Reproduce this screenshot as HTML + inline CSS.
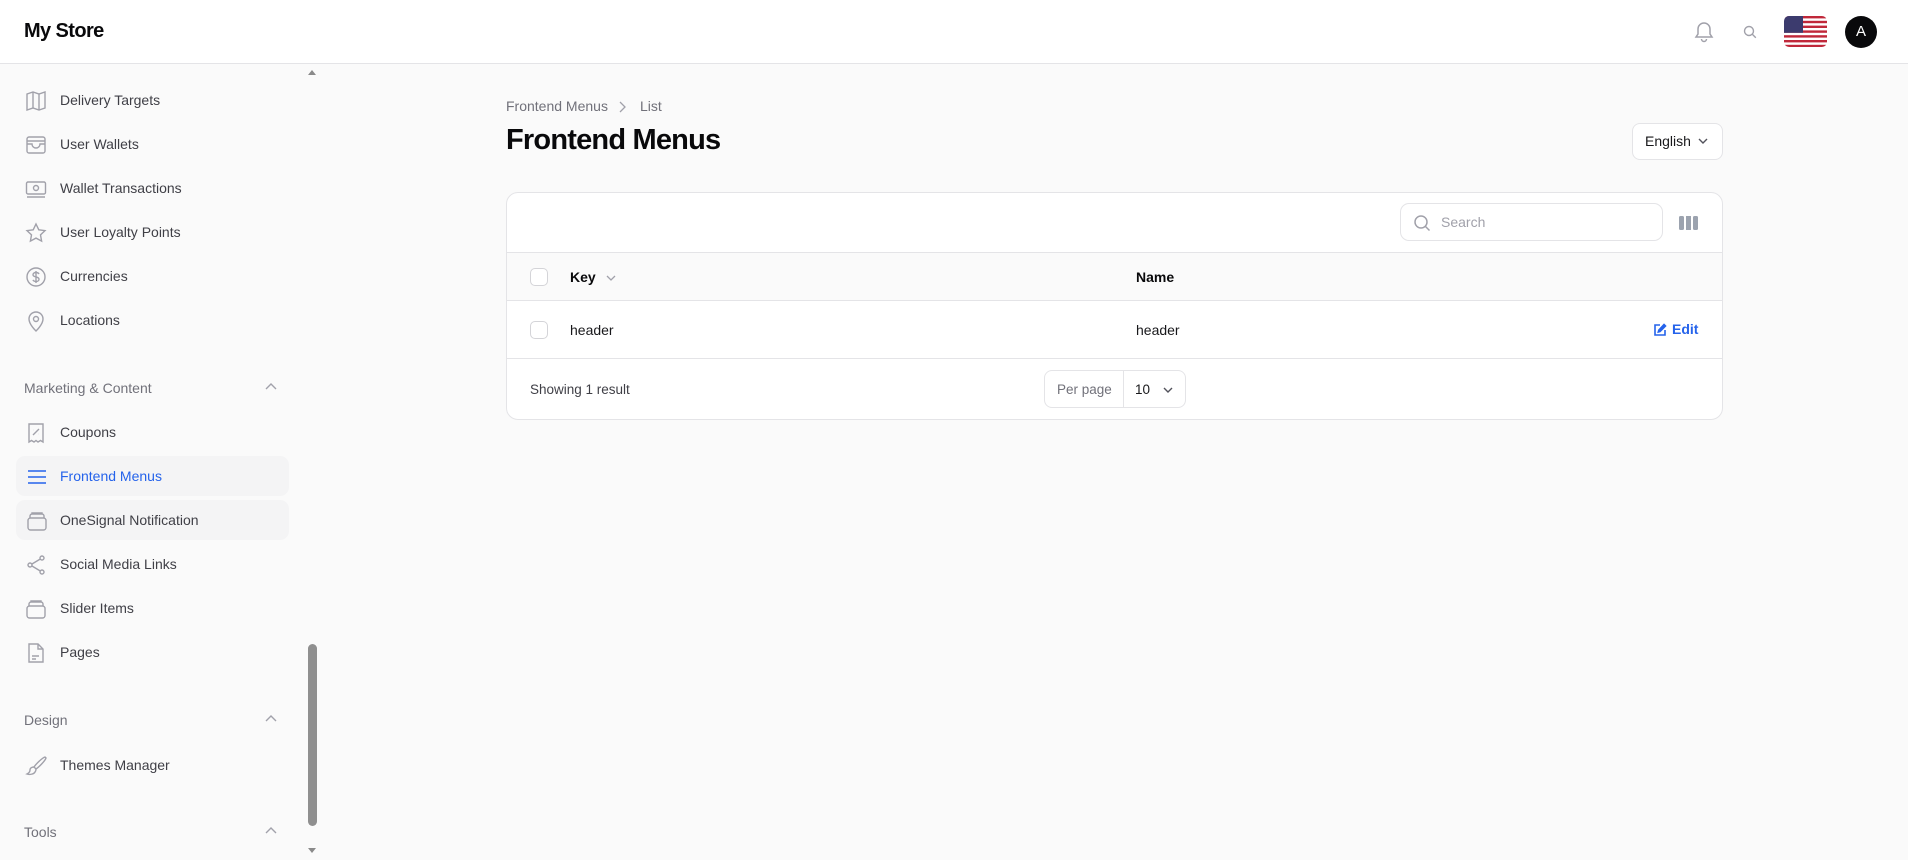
<!DOCTYPE html>
<html><head><meta charset="utf-8"><style>
*{box-sizing:border-box;margin:0;padding:0}
body{width:1908px;height:860px;overflow:hidden;background:#fafafa;font-family:"Liberation Sans",sans-serif;color:#18181b;position:relative}
.top{position:absolute;left:0;top:0;width:1908px;height:64px;background:#fff;border-bottom:1px solid #e4e4e7}
.logo{position:absolute;left:24px;top:20px;font-size:20px;font-weight:bold;letter-spacing:-0.6px;color:#09090b}
.abs{position:absolute}
.nav{position:absolute;left:0;font-size:14px;color:#3f3f46;height:40px;line-height:40px}
.nav .t{position:absolute;left:60px;white-space:nowrap}
.nav svg{position:absolute;left:25px;top:10px}
.grp{position:absolute;left:24px;font-size:14px;color:#71717a}
.chev{position:absolute;left:264px}
.card{position:absolute;left:506px;top:192px;width:1217px;height:228px;background:#fff;border:1px solid #e4e4e7;border-radius:12px;overflow:hidden}
.cb{position:absolute;width:18px;height:18px;border:1px solid #d4d4d8;border-radius:5px;background:#fff}
</style></head><body>
<div class="top">
<div class="logo">My Store</div>
<svg class="abs" style="left:1693px;top:20px" width="22" height="24" viewBox="0 0 22 24" fill="none" stroke="#a1a1aa" stroke-width="1.5"><path d="M11 3a6 6 0 0 0-6 6v5l-2 3h16l-2-3V9a6 6 0 0 0-6-6z"/><path d="M8.5 19a2.5 2.5 0 0 0 5 0"/></svg>
<svg class="abs" style="left:1742px;top:24px" width="16" height="16" viewBox="0 0 16 16" fill="none" stroke="#a1a1aa" stroke-width="1.4"><circle cx="7" cy="7" r="4.5"/><path d="M10.3 10.3l3.5 3.5"/></svg>
<svg class="abs" style="left:1784px;top:16px" width="43" height="31" viewBox="0 0 43 31"><defs><clipPath id="c"><rect width="43" height="31" rx="5"/></clipPath></defs><g clip-path="url(#c)"><rect width="43" height="31" fill="#fff"/><g fill="#c0283a"><rect y="0" width="43" height="2.4"/><rect y="4.8" width="43" height="2.4"/><rect y="9.6" width="43" height="2.4"/><rect y="14.4" width="43" height="2.4"/><rect y="19.2" width="43" height="2.4"/><rect y="24" width="43" height="2.4"/><rect y="28.8" width="43" height="2.4"/></g><rect width="19" height="16.8" fill="#3c3b6e"/></g></svg>
<div class="abs" style="left:1845px;top:16px;width:32px;height:32px;border-radius:50%;background:#09090b;color:#fff;font-size:15px;text-align:center;line-height:32px">A</div>
</div>

<div class="abs" style="left:305px;top:65px;width:15px;height:795px;background:#fafafa"></div>
<div class="abs" style="left:308px;top:70px;width:0;height:0;border-left:4px solid transparent;border-right:4px solid transparent;border-bottom:5px solid #8a8a8a"></div>
<div class="abs" style="left:308px;top:848px;width:0;height:0;border-left:4px solid transparent;border-right:4px solid transparent;border-top:5px solid #8a8a8a"></div>
<div class="abs" style="left:308px;top:644px;width:9px;height:182px;border-radius:5px;background:#8f8f8f"></div>

<div class="nav" style="top:80px"><svg width="22" height="22" viewBox="0 0 22 22" fill="none" stroke="#a1a1aa" stroke-width="1.4"><path d="M2 4l6-2 6 2 6-2v16l-6 2-6-2-6 2z"/><path d="M8 2v16M14 4v16"/></svg><span class="t">Delivery Targets</span></div>
<div class="nav" style="top:124px"><svg width="22" height="22" viewBox="0 0 22 22" fill="none" stroke="#a1a1aa" stroke-width="1.4"><rect x="2" y="3" width="18" height="16" rx="2"/><path d="M2 7h18M2 10h5a4 4 0 0 0 8 0h5"/></svg><span class="t">User Wallets</span></div>
<div class="nav" style="top:168px"><svg width="22" height="22" viewBox="0 0 22 22" fill="none" stroke="#a1a1aa" stroke-width="1.4"><rect x="1.5" y="4" width="19" height="12" rx="1.5"/><circle cx="11" cy="10" r="2.5"/><path d="M2 19h18"/></svg><span class="t">Wallet Transactions</span></div>
<div class="nav" style="top:212px"><svg width="22" height="22" viewBox="0 0 22 22" fill="none" stroke="#a1a1aa" stroke-width="1.4"><path d="M11 2l2.8 5.8 6.2.8-4.5 4.3 1.1 6.2L11 16.1 5.4 19.1l1.1-6.2L2 8.6l6.2-.8z"/></svg><span class="t">User Loyalty Points</span></div>
<div class="nav" style="top:256px"><svg width="22" height="22" viewBox="0 0 22 22" fill="none" stroke="#a1a1aa" stroke-width="1.4"><circle cx="11" cy="11" r="9"/><path d="M14 8c-.5-1-1.6-1.5-3-1.5-1.7 0-3 .8-3 2.2 0 3 6 1.5 6 4.5 0 1.4-1.3 2.3-3 2.3-1.5 0-2.6-.6-3-1.6M11 5v12"/></svg><span class="t">Currencies</span></div>
<div class="nav" style="top:300px"><svg width="22" height="22" viewBox="0 0 22 22" fill="none" stroke="#a1a1aa" stroke-width="1.4"><path d="M11 21s-7-6.5-7-12a7 7 0 0 1 14 0c0 5.5-7 12-7 12z"/><circle cx="11" cy="9" r="2.5"/></svg><span class="t">Locations</span></div>

<div class="grp" style="top:380px">Marketing &amp; Content</div>
<svg class="chev" style="top:382px" width="14" height="10" viewBox="0 0 14 10" fill="none" stroke="#a1a1aa" stroke-width="1.4"><path d="M2 7l5-5 5 5"/></svg>

<div class="nav" style="top:412px"><svg width="22" height="22" viewBox="0 0 22 22" fill="none" stroke="#a1a1aa" stroke-width="1.4"><path d="M4 2h14v18l-2.5-1.5L13 20l-2-1.5L9 20l-2.5-1.5L4 20z"/><path d="M8 13l6-6M8.5 8h.1M13.5 12h.1"/></svg><span class="t">Coupons</span></div>
<div class="nav" style="top:456px;left:16px;width:273px;background:#f4f4f5;border-radius:9px;color:#2563eb"><svg style="left:10px" width="22" height="22" viewBox="0 0 22 22" fill="none" stroke="#2563eb" stroke-width="1.6"><path d="M2 5h18M2 11h18M2 17h18"/></svg><span class="t" style="left:44px">Frontend Menus</span></div>
<div class="nav" style="top:500px;left:16px;width:273px;background:#f4f4f5;border-radius:9px"><svg style="left:10px" width="22" height="22" viewBox="0 0 22 22" fill="none" stroke="#a1a1aa" stroke-width="1.4"><rect x="2" y="8" width="18" height="12" rx="2.5"/><path d="M4 8V6a2 2 0 0 1 2-2h10a2 2 0 0 1 2 2v2M6 4V3h10v1"/></svg><span class="t" style="left:44px">OneSignal Notification</span></div>
<div class="nav" style="top:544px"><svg width="22" height="22" viewBox="0 0 22 22" fill="none" stroke="#a1a1aa" stroke-width="1.4"><circle cx="17" cy="4" r="2"/><circle cx="5" cy="11" r="2"/><circle cx="17" cy="18" r="2"/><path d="M7 10l8.3-5M7 12l8.3 5"/></svg><span class="t">Social Media Links</span></div>
<div class="nav" style="top:588px"><svg width="22" height="22" viewBox="0 0 22 22" fill="none" stroke="#a1a1aa" stroke-width="1.4"><rect x="2" y="8" width="18" height="12" rx="2.5"/><path d="M4 8V6a2 2 0 0 1 2-2h10a2 2 0 0 1 2 2v2M6 4V3h10v1"/></svg><span class="t">Slider Items</span></div>
<div class="nav" style="top:632px"><svg width="22" height="22" viewBox="0 0 22 22" fill="none" stroke="#a1a1aa" stroke-width="1.4"><path d="M4 2h9l5 5v13H4z"/><path d="M13 2v5h5M7 14h7M7 17h4"/></svg><span class="t">Pages</span></div>

<div class="grp" style="top:712px">Design</div>
<svg class="chev" style="top:714px" width="14" height="10" viewBox="0 0 14 10" fill="none" stroke="#a1a1aa" stroke-width="1.4"><path d="M2 7l5-5 5 5"/></svg>
<div class="nav" style="top:745px"><svg width="22" height="22" viewBox="0 0 22 22" fill="none" stroke="#a1a1aa" stroke-width="1.4"><path d="M20 2c-3 1-9 7-11 10l2 2c3-2 9-8 10-11z"/><path d="M9 12c-2 0-4 1-4 3 0 2-1 3-3 4 3 1 7 0 8-2 1-1 1-2 1-3"/></svg><span class="t">Themes Manager</span></div>
<div class="grp" style="top:824px">Tools</div>
<svg class="chev" style="top:826px" width="14" height="10" viewBox="0 0 14 10" fill="none" stroke="#a1a1aa" stroke-width="1.4"><path d="M2 7l5-5 5 5"/></svg>

<div class="abs" style="left:506px;top:98px;font-size:14px;color:#71717a">Frontend Menus</div>
<svg class="abs" style="left:617px;top:101px" width="10" height="12" viewBox="0 0 10 12" fill="none" stroke="#a1a1aa" stroke-width="1.3"><path d="M3 1l5 5-5 5"/></svg>
<div class="abs" style="left:640px;top:98px;font-size:14px;color:#71717a">List</div>
<div class="abs" style="left:506px;top:124px;font-size:29px;font-weight:bold;letter-spacing:-0.8px;color:#09090b">Frontend Menus</div>
<div class="abs" style="left:1632px;top:123px;width:91px;height:37px;background:#fff;border:1px solid #e4e4e7;border-radius:8px;font-size:14px;line-height:35px;padding-left:12px">English</div>
<svg class="abs" style="left:1697px;top:137px" width="12" height="8" viewBox="0 0 12 8" fill="none" stroke="#52525b" stroke-width="1.4"><path d="M2 2l4 4 4-4"/></svg>

<div class="card">
 <div class="abs" style="left:893px;top:10px;width:263px;height:38px;border:1px solid #e4e4e7;border-radius:9px"></div>
 <svg class="abs" style="left:906px;top:21px" width="18" height="18" viewBox="0 0 18 18" fill="none" stroke="#a1a1aa" stroke-width="1.5"><circle cx="8" cy="8" r="6"/><path d="M12.5 12.5l4 4"/></svg>
 <div class="abs" style="left:934px;top:21px;font-size:14px;color:#a1a1aa">Search</div>
 <svg class="abs" style="left:1172px;top:23px" width="19" height="14" viewBox="0 0 19 14" fill="#9ca3af"><rect x="0" y="0" width="5" height="14" rx="1.5"/><rect x="7" y="0" width="5" height="14"/><rect x="14" y="0" width="5" height="14" rx="1.5"/></svg>
 <div class="abs" style="left:0;top:59px;width:1217px;height:49px;background:#fafafa;border-top:1px solid #e4e4e7;border-bottom:1px solid #e4e4e7"></div>
 <div class="cb" style="left:23px;top:75px"></div>
 <div class="abs" style="left:63px;top:76px;font-size:14px;font-weight:bold;color:#09090b">Key</div>
 <svg class="abs" style="left:98px;top:81px" width="12" height="8" viewBox="0 0 12 8" fill="none" stroke="#a1a1aa" stroke-width="1.3"><path d="M2 2l4 4 4-4"/></svg>
 <div class="abs" style="left:629px;top:76px;font-size:14px;font-weight:bold;color:#09090b">Name</div>
 <div class="cb" style="left:23px;top:128px"></div>
 <div class="abs" style="left:63px;top:129px;font-size:14px">header</div>
 <div class="abs" style="left:629px;top:129px;font-size:14px">header</div>
 <svg class="abs" style="left:1146px;top:130px" width="14" height="14" viewBox="0 0 14 14" fill="none" stroke="#2563eb" stroke-width="1.6"><path d="M7 2H2v10h10V7"/><path d="M11 1.5l1.5 1.5L7 8.5 5.3 9 5.8 7.2z" fill="#2563eb"/></svg>
 <div class="abs" style="left:1165px;top:128px;font-size:14px;font-weight:bold;color:#2563eb">Edit</div>
 <div class="abs" style="left:0;top:165px;width:1217px;height:1px;background:#e4e4e7"></div>
 <div class="abs" style="left:23px;top:189px;font-size:13.5px;color:#3f3f46">Showing 1 result</div>
 <div class="abs" style="left:537px;top:177px;width:142px;height:38px;border:1px solid #e4e4e7;border-radius:8px"></div>
 <div class="abs" style="left:616px;top:178px;width:1px;height:36px;background:#e4e4e7"></div>
 <div class="abs" style="left:550px;top:189px;font-size:13.5px;color:#71717a">Per page</div>
 <div class="abs" style="left:628px;top:189px;font-size:13.5px;color:#18181b">10</div>
 <svg class="abs" style="left:655px;top:193px" width="12" height="8" viewBox="0 0 12 8" fill="none" stroke="#52525b" stroke-width="1.4"><path d="M2 2l4 4 4-4"/></svg>
</div>
</body></html>
